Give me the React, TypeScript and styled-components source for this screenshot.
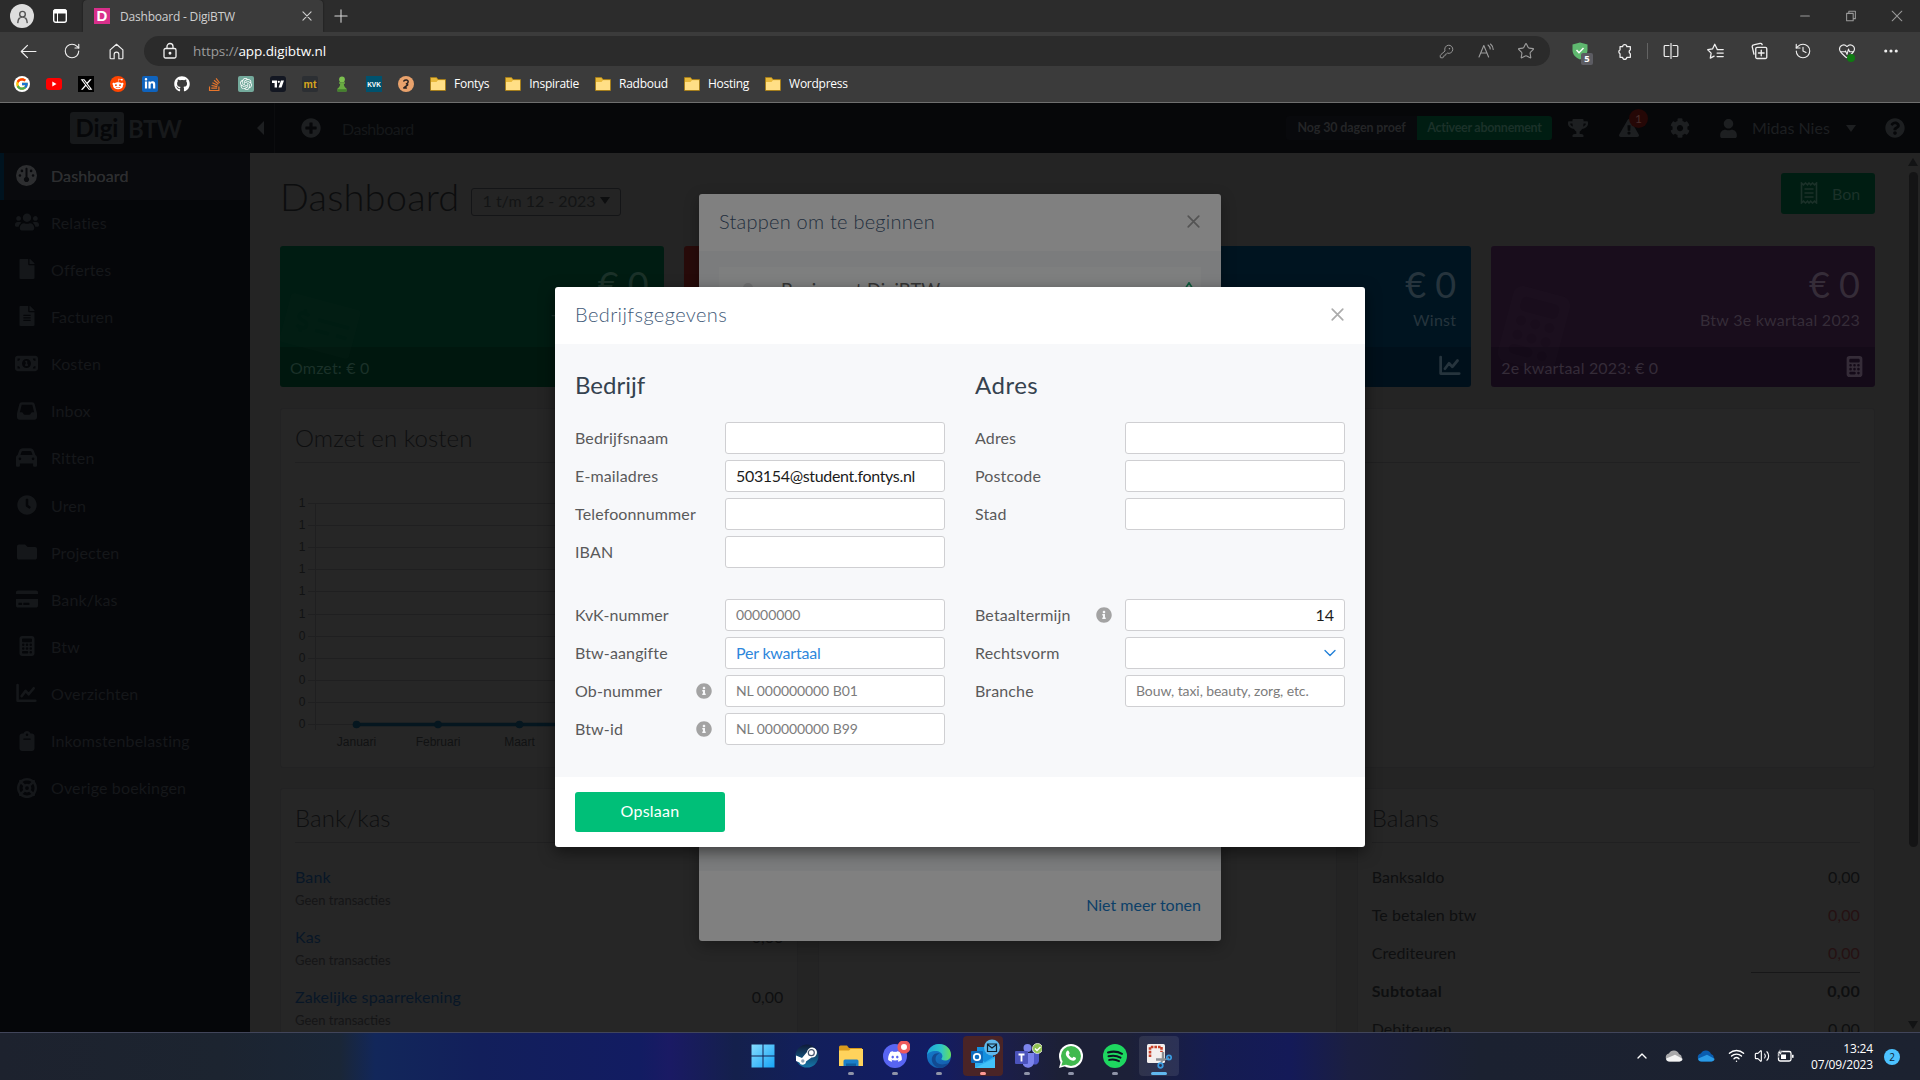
import React from 'react';
import styled, { createGlobalStyle, css } from 'styled-components';
import {
  FaUsers, FaFile, FaFileAlt, FaClock, FaFolder, FaCreditCard,
  FaPlusCircle, FaTrophy, FaExclamationTriangle, FaCog, FaUser,
  FaQuestionCircle, FaInfoCircle, FaGithub, FaStackOverflow,
  FaDiscord, FaRedditAlien, FaLinkedinIn, FaMoneyCheckAlt,
} from 'react-icons/fa';
import { FaXTwitter, FaCalculator, FaInbox, FaLifeRing, FaCar, FaGauge, FaMoneyBill1, FaClipboard } from 'react-icons/fa6';
import { FcGoogle } from 'react-icons/fc';
import { SiOpenai } from 'react-icons/si';
import { RotateCw, KeyRound, Star, History, HeartPulse, Ellipsis, ChevronUp, ChevronDown, Wifi, Volume2 } from 'lucide-react';

const appFont = `Lato, "Noto Sans", sans-serif`;
const chromeFont = `"Open Sans", "Noto Sans", sans-serif`;

const GlobalStyle = createGlobalStyle`
  * { box-sizing: border-box; }
  body { margin: 0; background: #242424; overflow: hidden; }
  svg { display: block; flex: none; }
`;

const Screen = styled.div`
  width: 1920px;
  height: 1080px;
  display: flex;
  flex-direction: column;
  overflow: hidden;
  font-family: ${appFont};
`;

/* ---------- browser chrome ---------- */

const TabStrip = styled.div`
  height: 32px;
  flex: none;
  display: flex;
  align-items: center;
  background: #2c2c2c;
  color: #cfcfcf;
  font-family: ${chromeFont};
`;
const Avatar = styled.div`
  width: 24px;
  height: 24px;
  margin: 0 19px 0 10px;
  border-radius: 50%;
  background: #dedede;
  display: grid;
  place-items: center;
`;
const Tab = styled.div`
  width: 240px;
  height: 32px;
  margin-left: 16px;
  padding: 0 11px;
  display: flex;
  align-items: center;
  background: #3b3b3b;
  border-radius: 4px 4px 0 0;
  box-shadow: 0 0 2px rgba(0, 0, 0, 0.6);
  clip-path: inset(0 -3px 0 -3px);
`;
const Favicon = styled.div`
  width: 16px;
  height: 16px;
  margin-right: 10px;
  background: #d92f8b;
  color: #fff;
  font: 700 15px/16px "Liberation Sans", sans-serif;
  text-align: center;
`;
const TabTitle = styled.span`
  flex: 1;
  font-size: 12px;
  letter-spacing: -0.2px;
`;
const NewTab = styled.div`
  margin-left: 11px;
  flex: 1;
`;
const WindowControls = styled.div`
  display: flex;
  > * { width: 46px; display: grid; place-items: center; }
`;
const Toolbar = styled.div`
  height: 38px;
  flex: none;
  display: flex;
  align-items: center;
  background: #3b3b3b;
  color: #efefef;
`;
const ToolSlot = styled.div<{ $w?: number }>`
  width: ${p => p.$w ?? 44}px;
  display: grid;
  place-items: center;
  position: relative;
`;
const NavButtons = styled.div`
  display: flex;
  padding-left: 6px;
  width: 144px;
`;
const AddressBar = styled.div`
  width: 1406px;
  height: 30px;
  margin-right: 8px;
  padding: 0 4px 0 17px;
  border-radius: 15px;
  background: #2b2b2b;
  display: flex;
  align-items: center;
  color: #9c9c9c;
  font: 400 13.5px/18px ${chromeFont};
`;
const Url = styled.span`
  flex: 1;
  margin-left: 14px;
  letter-spacing: -0.08px;
  b { font-weight: 400; color: #fff; }
`;
const ToolDivider = styled.div`
  width: 1px;
  height: 16px;
  margin: 0 1px;
  background: #636363;
`;
const ShieldCount = styled.span`
  position: absolute;
  left: 23px;
  top: 11px;
  width: 12px;
  height: 12px;
  border-radius: 2px;
  background: #5c5c62;
  color: #fff;
  font: 700 9.5px/12px ${chromeFont};
  text-align: center;
`;
const GreenDot = styled.span`
  position: absolute;
  left: 22px;
  top: 12px;
  width: 8px;
  height: 8px;
  border-radius: 50%;
  background: #0f7a12;
`;
const BookmarkBar = styled.div`
  height: 33px;
  flex: none;
  display: flex;
  align-items: flex-start;
  padding: 6px 0 0 14px;
  background: #3b3b3b;
  border-bottom: 1px solid #6f6f6f;
`;
const Bookmark = styled.div<{ $bg?: string; $fg?: string; $round?: number; $size?: number }>`
  width: 16px;
  height: 16px;
  margin-right: 16px;
  display: grid;
  place-items: center;
  overflow: hidden;
  background: ${p => p.$bg ?? 'transparent'};
  color: ${p => p.$fg ?? '#fff'};
  border-radius: ${p => p.$round ?? 0}px;
  font: 700 ${p => p.$size ?? 8}px/15px "Liberation Sans", sans-serif;
`;
const FolderLink = styled.div`
  display: flex;
  align-items: center;
  gap: 8px;
  height: 16px;
  margin-right: 16px;
  color: #fff;
  font: 400 12px/16px ${chromeFont};
  letter-spacing: -0.26px;
`;

/* ---------- application ---------- */

const Page = styled.div`
  height: 929px;
  flex: none;
  position: relative;
  display: flex;
  flex-direction: column;
  overflow: hidden;
  background: #242424;
`;
const TopNav = styled.div`
  height: 50px;
  flex: none;
  display: flex;
  align-items: center;
  background: #060709;
  color: #1d1f21;
  font-size: 16px;
`;
const Brand = styled.div`
  width: 275px;
  height: 50px;
  padding-left: 70px;
  display: flex;
  align-items: center;
  border-right: 1px solid #0b0c0e;
  font: 700 24px/31px ${appFont};
  color: #17191b;
`;
const BrandBox = styled.span`
  width: 54px;
  height: 32px;
  border-radius: 3px;
  background: #17191b;
  color: #060709;
  text-align: center;
`;
const BrandRest = styled.span`
  width: 128px;
  padding-left: 4px;
  letter-spacing: -0.6px;
`;
const CollapseArrow = styled.span`
  width: 0;
  height: 0;
  margin-left: 5px;
  border: 7px solid transparent;
  border-right-color: #1d1f21;
  border-left: 0;
`;
const Crumb = styled.span`
  flex: 1;
  margin-left: 21px;
  letter-spacing: -0.5px;
  color: #151719;
`;
const TrialNote = styled.span<{ $action?: boolean }>`
  width: ${p => (p.$action ? 135 : 131)}px;
  height: 24px;
  border-radius: ${p => (p.$action ? '0 3px 3px 0' : '3px 0 0 3px')};
  background: ${p => (p.$action ? '#001d12' : '#08090c')};
  color: ${p => (p.$action ? '#1b3129' : '#242527')};
  font: 700 12.5px/24px ${appFont};
  letter-spacing: ${p => (p.$action ? -0.28 : -0.12)}px;
  text-align: center;
`;
const NavIcon = styled.div<{ $w: number }>`
  width: ${p => p.$w}px;
  display: grid;
  place-items: center;
  position: relative;
`;
const AlertCount = styled.span`
  position: absolute;
  right: 7px;
  top: -9px;
  width: 19px;
  height: 19px;
  border-radius: 50%;
  background: #250706;
  color: #4a2e2c;
  font-size: 12px;
  line-height: 19px;
  text-align: center;
`;
const Caret = styled.span<{ $color?: string }>`
  border: 5.5px solid transparent;
  border-top: 7px solid ${p => p.$color ?? '#1d1f21'};
  border-bottom: 0;
`;
const UserName = styled.span`
  width: 94px;
  padding-bottom: 2px;
`;
const HelpSlot = styled.div`
  width: 64px;
  padding-left: 29px;
`;
const Body = styled.div`
  flex: 1;
  min-height: 0;
  display: flex;
`;
const Sidebar = styled.nav`
  width: 250px;
  flex: none;
  background: #050609;
`;
const SideItem = styled.div<{ $active?: boolean }>`
  height: 47.15px;
  padding-bottom: 3px;
  display: flex;
  align-items: center;
  color: #15171a;
  font-size: 16px;
  letter-spacing: 0.15px;
  border-left: 4px solid transparent;
  ${p => p.$active && css`
    background: #090a0d;
    color: #2d2e30;
    border-left-color: #00131f;
    text-shadow: 0 0 0.6px #2d2e30;
  `}
`;
const SideIcon = styled.span`
  width: 45px;
  margin-right: 2px;
  display: grid;
  place-items: center;
`;
const Main = styled.main`
  flex: 1;
  display: flex;
  flex-direction: column;
  padding: 0 33px 0 30px;
  min-width: 0;
`;
const TitleRow = styled.div`
  height: 93px;
  flex: none;
  padding-top: 20px;
  display: flex;
  align-items: flex-start;
`;
const PageTitle = styled.h1`
  margin: 0 12px 0 0;
  font-size: 38px;
  line-height: 46px;
  font-weight: 300;
  letter-spacing: 0.2px;
  color: #0c0d0e;
  white-space: nowrap;
`;
const PeriodSelect = styled.div`
  width: 150px;
  height: 28px;
  margin: 15px auto 0 0;
  padding-bottom: 3px;
  border: 1px solid #141517;
  border-radius: 3px;
  display: flex;
  align-items: center;
  justify-content: center;
  gap: 5px;
  color: #131415;
  font-size: 16px;
`;
const ReceiptButton = styled.div`
  width: 94px;
  height: 41px;
  border-radius: 3px;
  background: #001d12;
  color: #1b3129;
  display: flex;
  align-items: center;
  padding: 0 0 1px 19px;
  gap: 14px;
  font-size: 16px;
`;
const StatGrid = styled.div`
  display: grid;
  grid-template-columns: repeat(4, 1fr);
  gap: 20px;
`;
const StatCard = styled.div<{ $bg: string; $foot: string; $fg: string }>`
  height: 141px;
  border-radius: 3px;
  overflow: hidden;
  position: relative;
  background: linear-gradient(${p => p.$bg} 101px, ${p => p.$foot} 101px);
  color: ${p => p.$fg};
  font-size: 16px;
  line-height: 19px;
  display: flex;
  flex-direction: column;
`;
const StatTop = styled.div`
  height: 101px;
  padding: 17px 15px 0;
  text-align: right;
  letter-spacing: 0.25px;
`;
const StatValue = styled.div`
  font-size: 36px;
  line-height: 43px;
  margin-bottom: 4px;
  letter-spacing: 0;
`;
const StatFoot = styled.div`
  height: 40px;
  padding: 1px 10px 0 10px;
  display: flex;
  align-items: center;
  justify-content: space-between;
  letter-spacing: 0.16px;
  svg { margin: 0 0 3px; }
`;
const GhostIcon = styled.div`
  position: absolute;
  left: 4px;
  top: 44px;
  transform: rotate(15deg);
  opacity: 0.08;
`;
const Panel = styled.section<{ $h?: number }>`
  ${p => p.$h && css`height: ${p.$h}px;`}
  background: #262626;
  border: 1px solid #222223;
  border-radius: 3px;
  padding: 0 14px;
  color: #0e0f10;
  font-size: 16px;
  line-height: 19px;
`;
const PanelTitle = styled.h2`
  height: 54px;
  margin: 0;
  padding: 14px 0 0;
  border-bottom: 1px solid #202021;
  font-weight: 300;
  font-size: 24px;
  line-height: 29px;
  letter-spacing: 0.1px;
`;
const ChartPanel = styled(Panel)`
  margin: 21px 0 20px;
  flex: none;
`;
const PanelGrid = styled.div`
  flex: 1;
  min-height: 0;
  display: grid;
  grid-template-columns: repeat(3, 1fr);
  gap: 20px;
  grid-auto-rows: 300px;
`;
const AccountList = styled.div`
  padding-top: 24px;
`;
const Account = styled.div`
  height: 60px;
  display: grid;
  grid-template-columns: 1fr auto;
  align-content: start;
  row-gap: 6px;
`;
const AccountName = styled.span`
  color: #081626;
  letter-spacing: 0.13px;
`;
const AccountNote = styled.span`
  color: #151516;
  font-size: 13px;
  line-height: 16px;
`;
const BalanceRow = styled.div<{ $total?: boolean; $due?: boolean }>`
  height: 38px;
  display: flex;
  justify-content: space-between;
  letter-spacing: 0.1px;
  font-weight: ${p => (p.$total ? 700 : 400)};
  span:last-child {
    color: ${p => (p.$due ? '#251112' : 'inherit')};
    position: relative;
  }
  ${p => p.$total && css`
    letter-spacing: 0.3px;
    span:last-child::before {
      content: '';
      position: absolute;
      right: 0;
      top: -9px;
      width: 109px;
      border-top: 1px solid #171718;
    }
  `}
`;
const ScrollTrack = styled.div`
  width: 12px;
  flex: none;
  display: flex;
  flex-direction: column;
  align-items: center;
  padding: 5px 2px 3px 0;
`;
const ScrollArrow = styled.span<{ $down?: boolean }>`
  border: 5px solid transparent;
  ${p => (p.$down ? 'border-top: 8px solid #121314; border-bottom: 0; margin-top: auto;' : 'border-bottom: 8px solid #121314; border-top: 0;')}
`;
const ScrollThumb = styled.span`
  width: 9px;
  height: 675px;
  margin-top: 6px;
  border-radius: 5px;
  background: #141415;
`;

/* ---------- dialogs ---------- */

const Dialog = styled.div<{ $x: number; $y: number; $w: number; $h: number; $dim?: boolean }>`
  position: absolute;
  left: ${p => p.$x}px;
  top: ${p => p.$y}px;
  width: ${p => p.$w}px;
  height: ${p => p.$h}px;
  display: flex;
  flex-direction: column;
  border-radius: 3px;
  overflow: hidden;
  background: ${p => (p.$dim ? '#808080' : '#fff')};
  box-shadow: 0 5px 15px rgba(0, 0, 0, ${p => (p.$dim ? 0.3 : 0.5)});
`;
const DialogHead = styled.div<{ $dim?: boolean }>`
  height: 57px;
  flex: none;
  padding: 0 21px 3px 20px;
  display: flex;
  align-items: center;
  justify-content: space-between;
  color: ${p => (p.$dim ? '#1f2e3d' : '#3f5a78')};
  font-weight: 300;
  font-size: 20px;
  letter-spacing: ${p => (p.$dim ? 0.24 : 0.4)}px;
`;
const StepsBody = styled.div`
  height: 620px;
  padding: 16px 20px;
  background: #7b7c7d;
`;
const StepCard = styled.div`
  height: 60px;
  padding: 12px 6px 0 24px;
  display: flex;
  background: #7e7f7f;
  color: #353535;
  font-size: 18.3px;
  line-height: 22px;
`;
const StepDot = styled.span`
  width: 10px;
  height: 10px;
  margin: 4px 28px 0 0;
  border-radius: 50%;
  background: #6f7071;
`;
const StepName = styled.span`
  flex: 1;
`;
const StepsFoot = styled.div`
  flex: 1;
  padding: 24px 20px 0;
  text-align: right;
  color: #0c3f68;
  font-size: 16px;
`;
const FormBody = styled.div`
  height: 433px;
  padding: 0 20px;
  background: #f7f8fa;
  display: grid;
  grid-template-columns: 370px 370px;
  column-gap: 30px;
`;
const FormColumn = styled.div`
  padding-top: 26px;
`;
const FormTitle = styled.h3<{ $ls: number }>`
  height: 52px;
  margin: 0;
  font-weight: 400;
  font-size: 24px;
  line-height: 29px;
  letter-spacing: ${p => p.$ls}px;
  color: #35424f;
`;
const FieldGroup = styled.div`
  height: 177px;
  display: flex;
  flex-direction: column;
  gap: 6px;
`;
const FieldRow = styled.div`
  height: 32px;
  display: flex;
  align-items: center;
`;
const Label = styled.label`
  flex: 1;
  font-size: 16px;
  line-height: 19px;
  letter-spacing: 0.14px;
  color: #5a5a5a;
  padding-bottom: 2px;
`;
const Info = styled.span`
  margin-right: 13px;
  color: #a3a3a3;
`;
const Field = styled.div<{ $kind?: 'value' | 'hint' | 'choice'; $right?: boolean; $tight?: boolean }>`
  width: 220px;
  height: 32px;
  padding: 0 5px ${p => (p.$kind === 'hint' ? 1 : 2)}px 10px;
  border: 1px solid #cfcfd2;
  border-radius: 3px;
  background: #fff;
  display: flex;
  align-items: center;
  justify-content: ${p => (p.$right ? 'flex-end' : 'flex-start')};
  ${p => p.$right && css`padding-right: 10px;`}
  font-size: ${p => (p.$kind === 'hint' ? 14 : 16)}px;
  letter-spacing: ${p => (p.$tight ? -0.33 : p.$kind === 'choice' ? -0.2 : -0.08)}px;
  color: ${p => (p.$kind === 'hint' ? '#7c7c7c' : p.$kind === 'choice' ? '#2e87dc' : '#1c1c1c')};
  white-space: nowrap;
  svg { margin: 1px -1px 0 auto; }
`;
const FormFoot = styled.div`
  padding: 15px 20px;
`;
const SaveButton = styled.div`
  width: 150px;
  height: 40px;
  border-radius: 3px;
  background: #00bf78;
  color: #fff;
  font-size: 16px;
  line-height: 38px;
  letter-spacing: 0.25px;
  text-align: center;
`;

/* ---------- taskbar ---------- */

const Taskbar = styled.div`
  height: 48px;
  flex: none;
  display: grid;
  grid-template-columns: 741px 440px 1fr;
  border-top: 1px solid #41455a;
  background: linear-gradient(90deg, #1d222e 0, #1c2430 220px, #1a2637 340px, #12275a 375px, #121f5b 480px, #121c62 640px,
    #1a1a64 670px, #14204c 735px, #121f5a 800px, #121c64 930px, #1b1d50 985px, #1c2036 1060px, #1c2038 1130px,
    #151c50 1210px, #141a58 1290px, #1b1f40 1350px, #1b2130 1480px, #1c2230 1920px);
`;
const AppTray = styled.div`
  grid-column: 2;
  display: flex;
`;
const TaskApp = styled.div<{ $bg?: string; $mark?: string; $wide?: boolean }>`
  width: 44px;
  height: 47px;
  padding-bottom: 1px;
  position: relative;
  display: grid;
  place-items: center;
  &::before {
    content: '';
    position: absolute;
    inset: 3px 2px 4px;
    border-radius: 4px;
    background: ${p => p.$bg ?? 'transparent'};
  }
  &::after {
    content: '';
    position: absolute;
    bottom: 5px;
    width: ${p => (p.$wide ? 16 : 6)}px;
    height: 3px;
    border-radius: 2px;
    background: ${p => p.$mark ?? 'transparent'};
  }
  > svg { position: relative; }
`;
const SystemTray = styled.div`
  display: flex;
  align-items: center;
  justify-content: flex-end;
  padding-right: 20px;
  color: #fff;
`;
const TraySlot = styled.div<{ $w: number }>`
  width: ${p => p.$w}px;
  padding-bottom: 2px;
  display: grid;
  place-items: center;
`;
const Clock = styled.div`
  width: 77px;
  margin-right: 11px;
  text-align: right;
  font: 400 12px/16px ${chromeFont};
  letter-spacing: -0.17px;
`;
const NoticeCount = styled.div`
  width: 16px;
  height: 16px;
  border-radius: 50%;
  background: #4cc2ff;
  color: #123;
  font: 400 10px/16px ${chromeFont};
  text-align: center;
`;

/* ---------- drawings ---------- */

const Line = ({ d, s = 16, w = 1.2, c = 'currentColor' }: { d: string; s?: number; w?: number; c?: string }) => (
  <svg width={s} height={s} viewBox="0 0 16 16" fill="none" stroke={c} strokeWidth={w} strokeLinecap="round" strokeLinejoin="round">
    <path d={d} />
  </svg>
);
const Cross = ({ c, s = 13 }: { c: string; s?: number }) => <Line d="M1.5 1.5l13 13M14.5 1.5l-13 13" s={s} w={2.1} c={c} />;
const Trend = ({ s }: { s: number }) => <Line d="M1.200 1.500v12h13.500M4.300 10l3-4 2.400 2.600L13.500 4" s={s} w={2} />;

const FolderGlyph = () => (
  <svg width="16" height="16" viewBox="0 0 16 16">
    <path d="M.5 1.500h6l1.500 2h7.500v11H.5z" fill="#e8b93b" stroke="#a97f14" strokeWidth=".8" />
    <path d="M1 6h5.500L8 4.300h7V14H1z" fill="#ffdf86" />
  </svg>
);

const months = ['Januari', 'Februari', 'Maart', 'April', 'Mei', 'Juni', 'Juli', 'Augustus', 'September', 'Oktober', 'November', 'December'];
const ticks = ['1', '1', '1', '1', '1', '1', '0', '0', '0', '0', '0'];

const Chart = () => (
  <svg width="1060" height="300" viewBox="295 463 1060 300" fontFamily="Liberation Sans, sans-serif" fontSize="12" fill="#111213">
    {ticks.map((t, i) => (
      <g key={i}>
        <path d={`M308 ${Math.round(503 + i * 22.1) + 0.5}H1294`} stroke="#1f1f20" />
        <text x="305.500" y={507 + i * 22.1} textAnchor="end">{t}</text>
      </g>
    ))}
    <path d="M315.500 503V730" stroke="#1f1f20" />
    <path d="M356.500 724.500H1253" stroke="#05161f" strokeWidth="3.500" />
    {months.map((m, i) => (
      <g key={m}>
        <circle cx={356.5 + i * 81.5} cy="724.500" r="3.800" fill="#05161f" />
        <text x={356.5 + i * 81.5} y="746" textAnchor="middle">{m}</text>
      </g>
    ))}
  </svg>
);

const Windows = () => (
  <svg width="24" height="24" viewBox="0 0 24 24">
    <defs>
      <linearGradient id="win" x1="0" y1="0" x2="1" y2="1"><stop offset="0" stopColor="#86dcff" /><stop offset="1" stopColor="#16a4f5" /></linearGradient>
    </defs>
    <path d="M.5.500h11v11H.5zM12.500.500h11v11h-11zM.5 12.500h11v11H.5zM12.500 12.500h11v11h-11z" fill="url(#win)" />
  </svg>
);
const Steam = () => (
  <svg width="24" height="24" viewBox="0 0 24 24">
    <defs><linearGradient id="stm" x1="0" y1="0" x2="0" y2="1"><stop offset="0" stopColor="#101a38" /><stop offset="1" stopColor="#1576a8" /></linearGradient></defs>
    <circle cx="12" cy="12" r="11.500" fill="url(#stm)" />
    <path d="M1 11.500l6 2.500 5-6a5 5 0 1 1 4.500 5.500L11 17.500a3.400 3.400 0 0 1-6.600 1L1 17z" fill="#fff" />
    <circle cx="16.300" cy="8.700" r="3" fill="none" stroke="#45536b" strokeWidth="1.200" />
    <circle cx="7.800" cy="17" r="1.700" fill="#8fa3b5" />
  </svg>
);
const Explorer = () => (
  <svg width="26" height="24" viewBox="0 0 26 24">
    <path d="M1 3a1.500 1.500 0 0 1 1.500-1.500H9L11 4h13v5H1z" fill="#d99a1c" />
    <path d="M1 6.500h10L12.500 5H25v17H1z" fill="#ffd35c" />
    <path d="M5.500 22v-5a1.500 1.500 0 0 1 1.500-1.500h12a1.500 1.500 0 0 1 1.500 1.500v5z" fill="#1b7fc9" />
    <path d="M8 22v-2.500h10V22z" fill="#10609f" />
  </svg>
);
const Discord = () => (
  <svg width="30" height="30" viewBox="0 0 30 30">
    <circle cx="15" cy="15" r="12" fill="#5865f2" />
    <g transform="translate(7.500 8)"><FaDiscord size={15} color="#fff" /></g>
    <circle cx="24" cy="6" r="4.800" fill="#fff" stroke="#ee5a5c" strokeWidth="3.600" />
  </svg>
);
const Edge = () => (
  <svg width="24" height="24" viewBox="0 0 24 24">
    <defs>
      <linearGradient id="edgeA" x1="0" y1=".3" x2="1" y2=".3"><stop offset="0" stopColor="#1ca6dc" /><stop offset=".6" stopColor="#2fc6c6" /><stop offset="1" stopColor="#67df5a" /></linearGradient>
      <linearGradient id="edgeB" x1="0" y1="0" x2=".6" y2="1"><stop offset="0" stopColor="#1380cf" /><stop offset="1" stopColor="#1560b0" /></linearGradient>
    </defs>
    <circle cx="12" cy="12" r="12" fill="url(#edgeB)" />
    <path d="M0 11C1 4 6 0 12 0c7 0 12 5 12 10.500 0 4-3 6-6 6-2.600 0-4-1-3.600-1.700.5-.8 1-1.400 1-2.800C15.400 9 12 7 8.500 7 4 7 1 9 0 11z" fill="url(#edgeA)" />
    <path d="M8.500 15c0-3 2-5 4-5.500C8 8 4 12 5 17c.6 3 3.500 6.500 7.500 7 4 0 7-2 9-5-7 3-13 1-13-4z" fill="#124a92" />
  </svg>
);
const Outlook = () => (
  <svg width="34" height="34" viewBox="0 0 34 34">
    <path d="M11 8h16v20H11z" fill="#1490df" />
    <path d="M9 18l10 5 10-6v12H9z" fill="#2fb0f2" />
    <path d="M9 29l20-10v10z" fill="#50d0ff" opacity=".6" />
    <rect x="5" y="12" width="12" height="12" rx="1" fill="#0f6cbd" />
    <circle cx="11" cy="18" r="3.200" fill="none" stroke="#fff" strokeWidth="1.800" />
    <circle cx="26" cy="8.500" r="8" fill="#5fb8ec" />
    <path d="M21.500 5h9v7.500h-9zM21.500 5.500l4.500 3.500 4.500-3.500" fill="none" stroke="#10202e" strokeWidth="1.200" />
  </svg>
);
const Teams = () => (
  <svg width="30" height="30" viewBox="0 0 30 30">
    <circle cx="15.500" cy="7" r="4" fill="#7b83eb" />
    <circle cx="23" cy="9" r="3" fill="#5059c9" />
    <path d="M20 12h7v8a4 4 0 0 1-6 3z" fill="#5059c9" />
    <path d="M11 12h11v9a6 6 0 0 1-11 3z" fill="#7b83eb" />
    <rect x="3" y="10" width="13" height="13" rx="1" fill="#4b53bc" />
    <path d="M6.500 13.500h6M9.500 13.500v7" stroke="#fff" strokeWidth="1.800" />
    <circle cx="25.500" cy="7.500" r="5" fill="#92c353" stroke="#f3f3e6" strokeWidth=".8" />
    <path d="M23 7.500l2 2 3.500-3.500" stroke="#fff" strokeWidth="1.400" fill="none" />
  </svg>
);
const WhatsApp = () => (
  <svg width="24" height="24" viewBox="0 0 24 24">
    <circle cx="12" cy="12" r="12" fill="#fff" />
    <path d="M0 24l2-7 5 5z" fill="#fff" />
    <circle cx="12" cy="12" r="10" fill="#40b94e" />
    <path d="M2.300 21.700l1.500-5 4 3.700z" fill="#40b94e" />
    <path d="M7.500 7.500c1-1.500 2-1 2.400 0l.7 1.600c.1.500-.8 1.300-.8 1.600.7 1.500 2 2.600 3.500 3.200.4 0 1-1.200 1.500-1.100l2 1c.6.500-.1 3-2.400 3-3.600 0-8-4.500-7.600-7.200.1-.8.400-1.600.7-2.100z" fill="#fff" />
  </svg>
);
const Spotify = () => (
  <svg width="24" height="24" viewBox="0 0 24 24">
    <circle cx="12" cy="12" r="12" fill="#1ed760" />
    <path d="M5 8.500c4.500-1.300 10-1 14 1.300M5.500 12.300c4-1.100 8.500-.7 12 1.300M6.200 15.900c3.300-.8 6.700-.5 9.800 1.200" stroke="#0d1420" strokeWidth="2" fill="none" strokeLinecap="round" />
  </svg>
);
const Snip = () => (
  <svg width="26" height="26" viewBox="0 0 26 26">
    <rect x="1" y="1" width="18" height="19" rx="1.500" fill="#f3efee" />
    <path d="M4 14V4h11.500v5" stroke="#c8412a" strokeWidth="2.600" strokeDasharray="2.600 1" fill="none" />
    <path d="M17 9v9M10 16.500h9" stroke="#8b8f94" strokeWidth="2.400" />
    <path d="M17 16l-2 4M18 17l5-2" stroke="#8b8f94" strokeWidth="1.800" />
    <circle cx="14.500" cy="22.500" r="2.300" fill="none" stroke="#3a9be0" strokeWidth="1.700" />
    <circle cx="23" cy="14.500" r="2.200" fill="none" stroke="#3a9be0" strokeWidth="1.700" />
  </svg>
);
const Pawn = () => (
  <svg width="12" height="16" viewBox="0 0 12 16">
    <circle cx="6" cy="3.400" r="2.900" fill="#7cc04f" />
    <path d="M3 6.200h6v1.500H7.800c.2 2.500 1.200 3.600 2.700 4.800V15.500h-9v-3C3 11.300 4 10.200 4.200 7.700H3z" fill="#69ab42" />
    <path d="M1.500 13.200h9v2.300h-9z" fill="#43802c" />
  </svg>
);
const Cloud = ({ a, b }: { a: string; b: string }) => (
  <svg width="18" height="14" viewBox="0 0 18 14">
    <path d="M4.500 12.500a4 4 0 0 1-.6-7.900A5.500 5.500 0 0 1 14 5a4 4 0 0 1 .5 7.500z" fill={a} />
    <path d="M4.500 12.500C2 12.500 1 11 1.300 9.500L10 5.800l7.500 4c0 1.700-1.300 2.700-3 2.700z" fill={b} />
  </svg>
);
const Battery = () => (
  <svg width="18" height="16" viewBox="0 0 18 16" fill="none" stroke="#fff" strokeWidth="1.300">
    <rect x="2.500" y="3.500" width="12.500" height="9.500" rx="1.800" />
    <path d="M16.800 6.800v3" strokeWidth="1.600" />
    <rect x="5" y="6.500" width="5" height="4.500" fill="#fff" stroke="none" />
    <path d="M4.500.500L1.200 5.800h2.400L2.300 9.500 6.500 4H4z" fill="#fff" stroke="#1c2230" strokeWidth=".6" />
  </svg>
);
const Receipt = () => (
  <svg width="18" height="22" viewBox="0 0 18 22" fill="none" stroke="currentColor" strokeWidth="1.600">
    <path d="M1.500 1l2 1.800L5.500 1l2 1.800L9 1l1.700 1.800L12.500 1l2 1.800L16.500 1v20l-2-1.800-2 1.800-1.800-1.800L9 21l-1.500-1.800-2 1.800-2-1.800L1.500 21z" />
    <path d="M4.500 7h9M4.500 11h9M4.500 15h9" />
  </svg>
);

const sideItems: [string, React.ReactNode][] = [
  ['Dashboard', <FaGauge size={21} />],
  ['Relaties', <FaUsers size={24} />],
  ['Offertes', <FaFile size={20} />],
  ['Facturen', <FaFileAlt size={20} />],
  ['Kosten', <FaMoneyBill1 size={23} />],
  ['Inbox', <FaInbox size={20} />],
  ['Ritten', <FaCar size={21} />],
  ['Uren', <FaClock size={20} />],
  ['Projecten', <FaFolder size={20} />],
  ['Bank/kas', <FaCreditCard size={22} />],
  ['Btw', <FaCalculator size={20} />],
  ['Overzichten', <Trend s={21} />],
  ['Inkomstenbelasting', <FaClipboard size={20} />],
  ['Overige boekingen', <FaLifeRing size={20} />],
];

const stats = [
  { label: 'Te ontvangen', foot: 'Omzet: € 0', bg: '#001c12', dark: '#00170e', fg: '#1b3129', ghost: <FaMoneyCheckAlt size={72} />, icon: null },
  { label: 'Te betalen', foot: 'Kosten: € 0', bg: '#280b0a', dark: '#200908', fg: '#402a29', ghost: null, icon: null },
  { label: 'Winst', foot: '', bg: '#001420', dark: '#00101b', fg: '#26343d', ghost: null, icon: <Trend s={22} /> },
  { label: 'Btw 3e kwartaal 2023', foot: '2e kwartaal 2023: € 0', bg: '#190d1c', dark: '#140a18', fg: '#352c38', ghost: <FaCalculator size={78} />, icon: <FaCalculator size={21} /> },
];

type FieldSpec = { label: string; text?: string; kind?: 'value' | 'hint' | 'choice'; info?: boolean; right?: boolean; tight?: boolean; arrow?: boolean };
const leftTop: FieldSpec[] = [
  { label: 'Bedrijfsnaam' },
  { label: 'E-mailadres', text: '503154@student.fontys.nl', tight: true },
  { label: 'Telefoonnummer' },
  { label: 'IBAN' },
];
const leftBottom: FieldSpec[] = [
  { label: 'KvK-nummer', text: '00000000', kind: 'hint' },
  { label: 'Btw-aangifte', text: 'Per kwartaal', kind: 'choice' },
  { label: 'Ob-nummer', text: 'NL 000000000 B01', kind: 'hint', info: true },
  { label: 'Btw-id', text: 'NL 000000000 B99', kind: 'hint', info: true },
];
const rightTop: FieldSpec[] = [{ label: 'Adres' }, { label: 'Postcode' }, { label: 'Stad' }];
const rightBottom: FieldSpec[] = [
  { label: 'Betaaltermijn', text: '14', info: true, right: true },
  { label: 'Rechtsvorm', arrow: true },
  { label: 'Branche', text: 'Bouw, taxi, beauty, zorg, etc.', kind: 'hint' },
];

const Fields = ({ items }: { items: FieldSpec[] }) => (
  <FieldGroup>
    {items.map(f => (
      <FieldRow key={f.label}>
        <Label>{f.label}</Label>
        {f.info && <Info><FaInfoCircle size={16} /></Info>}
        <Field $kind={f.kind} $right={f.right} $tight={f.tight}>
          {f.text}
          {f.arrow && <ChevronDown size={20} strokeWidth={1.6} color="#2280d8" />}
        </Field>
      </FieldRow>
    ))}
  </FieldGroup>
);

const Browser = () => (
  <>
    <TabStrip>
      <Avatar><Line d="M8 8.500a3 3 0 1 0 0-6 3 3 0 0 0 0 6zM3 14.500c.3-4 2.300-6 5-6s4.700 2 5 6" s={15} w={1.5} c="#555" /></Avatar>
      <svg width="14" height="14" viewBox="0 0 14 14"><rect x=".7" y=".7" width="12.600" height="12.600" rx="2" fill="none" stroke="#fff" strokeWidth="1.400" /><path d="M1 1h12v3H1zM4.500 4v9" stroke="#fff" fill="#fff" /></svg>
      <Tab>
        <Favicon>D</Favicon>
        <TabTitle>Dashboard - DigiBTW</TabTitle>
        <Line d="M1.500 1.500l13 13M14.500 1.500l-13 13" s={10} w={1.8} c="#cfcfcf" />
      </Tab>
      <NewTab><Line d="M8 1v14M1 8h14" s={14} c="#d8d8d8" /></NewTab>
      <WindowControls>
        <Line d="M3 8h10" c="#9a9a9a" s={14} />
        <Line d="M3 5h7.500v8.500H3zM5.500 5V2.500H13V11h-2.500" c="#9a9a9a" s={14} />
        <Line d="M2.500 2.500l11 11M13.500 2.500l-11 11" c="#9a9a9a" s={14} />
      </WindowControls>
    </TabStrip>
    <Toolbar>
      <NavButtons>
        <ToolSlot><Line d="M15 8H1.500M7 2.200L1.200 8 7 13.800" s={17} w={1.1} /></ToolSlot>
        <ToolSlot><RotateCw size={18} strokeWidth={1.5} /></ToolSlot>
        <ToolSlot><Line d="M2 6.500L8 1.200l6 5.300V14a.8.800 0 0 1-.8.800H10.200v-4a2.200 2.200 0 0 0-4.400 0v4H2.800A.8.800 0 0 1 2 14z" s={17} w={1.1} /></ToolSlot>
      </NavButtons>
      <AddressBar>
        <svg width="18" height="18" viewBox="0 0 18 18" fill="none" stroke="#f0f0f0" strokeWidth="1.300"><rect x="3" y="6.500" width="12" height="9.500" rx="1.500" /><path d="M6 6.500V4.500a3 3 0 0 1 6 0v2" /><circle cx="9" cy="11.300" r=".8" fill="#fff" /></svg>
        <Url>https://<b>app.digibtw.nl</b></Url>
        <ToolSlot $w={40}><KeyRound size={15} strokeWidth={1.5} /></ToolSlot>
        <ToolSlot $w={40}><Line d="M1 14L5.800 2.500 10.600 14M2.800 10h6M10 2c1.600 1.200 2.200 2.600 2.200 4M12.500 1c1.800 1.500 2.700 3.200 2.700 5.500" s={16} w={1.1} /></ToolSlot>
        <ToolSlot $w={40}><Star size={18} strokeWidth={1.5} /></ToolSlot>
      </AddressBar>
      <ToolSlot>
        <svg width="16" height="18" viewBox="0 0 16 18"><path d="M8 .5l7.500 2V8c0 5-3.500 7.500-7.500 9.500C4 15.500.5 13 .5 8V2.500z" fill="#5fb86f" /><path d="M4.500 8l2.500 2.700L11.500 6" stroke="#fff" strokeWidth="1.500" fill="none" /></svg>
        <ShieldCount>5</ShieldCount>
      </ToolSlot>
      <ToolSlot><Line d="M3.800 3.500h2.400a2 2 0 0 1 4 0h3.300v3a2 2 0 0 0 0 3.600v3.400h-3.300a2 2 0 0 1-4 0H3.800v-3.400a2 2 0 0 1 0-3.600z" s={17} /></ToolSlot>
      <ToolDivider />
      <ToolSlot><Line d="M6 2.500H2.200a1 1 0 0 0-1 1v9a1 1 0 0 0 1 1H6M10 2.500h3.800a1 1 0 0 1 1 1v9a1 1 0 0 1-1 1H10M8 .5v15" /></ToolSlot>
      <ToolSlot><Line d="M9.500 5.600L7.300 1.200 5.200 5.600.700 6.300l3.200 3.200-.8 4.700 3.600-1.900M9.500 6.200H15.300M9.500 9.500H15.300M9.500 12.800H15.300" s={17} /></ToolSlot>
      <ToolSlot><Line d="M3.500 10.800L2 4.300a1.500 1.500 0 0 1 1.200-1.800L9 1.200a1.500 1.500 0 0 1 1.800 1.200M6.300 4.800h7.400a1.200 1.200 0 0 1 1.200 1.200v7.500a1.200 1.200 0 0 1-1.200 1.200H6.300a1.200 1.200 0 0 1-1.200-1.200V6a1.200 1.200 0 0 1 1.200-1.200zM10 7.300v5M7.500 9.800h5" s={18} /></ToolSlot>
      <ToolSlot><History size={18} strokeWidth={1.5} /></ToolSlot>
      <ToolSlot><HeartPulse size={18} strokeWidth={1.5} /><GreenDot /></ToolSlot>
      <ToolSlot><Ellipsis size={18} strokeWidth={2.2} /></ToolSlot>
    </Toolbar>
    <BookmarkBar>
      <Bookmark $bg="#fff" $round={8}><FcGoogle size={14} /></Bookmark>
      <Bookmark><svg width="16" height="12" viewBox="0 0 16 12"><rect width="16" height="12" rx="3" fill="#f00" /><path d="M6.300 3.500l4.200 2.500-4.200 2.500z" fill="#fff" /></svg></Bookmark>
      <Bookmark $bg="#000"><FaXTwitter size={13} /></Bookmark>
      <Bookmark $bg="#ff4500" $round={8}><FaRedditAlien size={12} /></Bookmark>
      <Bookmark $bg="#0f63bd" $round={2}><FaLinkedinIn size={12} /></Bookmark>
      <Bookmark><FaGithub size={16} /></Bookmark>
      <Bookmark $fg="#e8762c"><FaStackOverflow size={15} /></Bookmark>
      <Bookmark $bg="#74aa9c" $round={2}><SiOpenai size={12} /></Bookmark>
      <Bookmark $bg="#131722" $round={3}><svg width="12" height="8" viewBox="0 0 12 8"><path d="M0 .5h5V7.500H2.600V3H0z" fill="#fff" /><circle cx="6.800" cy="1.800" r="1.100" fill="#fff" /><path d="M9 .5h3L9.500 7.500H6.600z" fill="#fff" /></svg></Bookmark>
      <Bookmark $bg="#2c2f33" $fg="#d6a51e" $round={2} $size={10.5}>mt</Bookmark>
      <Bookmark><Pawn /></Bookmark>
      <Bookmark $bg="#00526e"><svg width="14" height="8" viewBox="0 0 14 8" fontFamily="Liberation Sans" fontWeight="700" fontSize="6.500" fill="#fff"><text x="7" y="6.500" textAnchor="middle">KVK</text></svg></Bookmark>
      <Bookmark $bg="#e9a26c" $round={8}><Line d="M5.500 4.500C7 3 10.500 3 10.500 5.500c0 1.500-1 2-2 2.200l1.500 1.300-4.500 3.500h3" c="#2a2220" w={1.7} s={14} /></Bookmark>
      {['Fontys', 'Inspiratie', 'Radboud', 'Hosting', 'Wordpress'].map(name => (
        <FolderLink key={name}><FolderGlyph />{name}</FolderLink>
      ))}
    </BookmarkBar>
  </>
);

export default function App() {
  return (
    <Screen>
      <GlobalStyle />
      <Browser />
      <Page>
        <TopNav>
          <Brand>
            <BrandBox>Digi</BrandBox>
            <BrandRest>BTW</BrandRest>
            <CollapseArrow />
          </Brand>
          <NavIcon $w={46}><NavIcon $w={72}><FaPlusCircle size={20} /></NavIcon></NavIcon>
          <Crumb>Dashboard</Crumb>
          <TrialNote>Nog 30 dagen proef</TrialNote>
          <TrialNote $action>Activeer abonnement</TrialNote>
          <NavIcon $w={51}><FaTrophy size={20} /></NavIcon>
          <NavIcon $w={52}><FaExclamationTriangle size={20} /><AlertCount>1</AlertCount></NavIcon>
          <NavIcon $w={49}><FaCog size={20} /></NavIcon>
          <NavIcon $w={48}><FaUser size={19} /></NavIcon>
          <UserName>Midas Nies</UserName>
          <Caret />
          <HelpSlot><FaQuestionCircle size={20} /></HelpSlot>
        </TopNav>
        <Body>
          <Sidebar>
            {sideItems.map(([name, icon], i) => (
              <SideItem key={name} $active={i === 0}><SideIcon>{icon}</SideIcon>{name}</SideItem>
            ))}
          </Sidebar>
          <Main>
            <TitleRow>
              <PageTitle>Dashboard</PageTitle>
              <PeriodSelect>1 t/m 12 - 2023<Caret $color="#0d0e0f" /></PeriodSelect>
              <ReceiptButton><Receipt />Bon</ReceiptButton>
            </TitleRow>
            <StatGrid>
              {stats.map(s => (
                <StatCard key={s.label} $bg={s.bg} $foot={s.dark} $fg={s.fg}>
                  {s.ghost && <GhostIcon>{s.ghost}</GhostIcon>}
                  <StatTop><StatValue>€ 0</StatValue>{s.label}</StatTop>
                  <StatFoot><span>{s.foot}</span>{s.icon}</StatFoot>
                </StatCard>
              ))}
            </StatGrid>
            <ChartPanel $h={360}>
              <PanelTitle>Omzet en kosten</PanelTitle>
              <Chart />
            </ChartPanel>
            <PanelGrid>
              <Panel>
                <PanelTitle>Bank/kas</PanelTitle>
                <AccountList>
                  {['Bank', 'Kas', 'Zakelijke spaarrekening'].map(name => (
                    <Account key={name}>
                      <AccountName>{name}</AccountName><span>0,00</span>
                      <AccountNote>Geen transacties</AccountNote>
                    </Account>
                  ))}
                </AccountList>
              </Panel>
              <Panel />
              <Panel>
                <PanelTitle>Balans</PanelTitle>
                <AccountList>
                  <BalanceRow><span>Banksaldo</span><span>0,00</span></BalanceRow>
                  <BalanceRow $due><span>Te betalen btw</span><span>0,00</span></BalanceRow>
                  <BalanceRow $due><span>Crediteuren</span><span>0,00</span></BalanceRow>
                  <BalanceRow $total><span>Subtotaal</span><span>0,00</span></BalanceRow>
                  <BalanceRow><span>Debiteuren</span><span>0,00</span></BalanceRow>
                </AccountList>
              </Panel>
            </PanelGrid>
          </Main>
          <ScrollTrack><ScrollArrow /><ScrollThumb /><ScrollArrow $down /></ScrollTrack>
        </Body>

        <Dialog $x={699} $y={91} $w={522} $h={747} $dim>
          <DialogHead $dim>Stappen om te beginnen<Cross c="#545454" /></DialogHead>
          <StepsBody>
            <StepCard><StepDot /><StepName>Begin met DigiBTW</StepName><Line d="M3 13L8 5l5 8" c="#0d5a3c" s={12} w={2} /></StepCard>
          </StepsBody>
          <StepsFoot>Niet meer tonen</StepsFoot>
        </Dialog>

        <Dialog $x={555} $y={184} $w={810} $h={560}>
          <DialogHead>Bedrijfsgegevens<Cross c="#acacac" /></DialogHead>
          <FormBody>
            <FormColumn>
              <FormTitle $ls={0}>Bedrijf</FormTitle>
              <Fields items={leftTop} />
              <Fields items={leftBottom} />
            </FormColumn>
            <FormColumn>
              <FormTitle $ls={0.5}>Adres</FormTitle>
              <Fields items={rightTop} />
              <Fields items={rightBottom} />
            </FormColumn>
          </FormBody>
          <FormFoot><SaveButton>Opslaan</SaveButton></FormFoot>
        </Dialog>
      </Page>

      <Taskbar>
        <AppTray>
          <TaskApp><Windows /></TaskApp>
          <TaskApp><Steam /></TaskApp>
          <TaskApp $mark="#8f94a8"><Explorer /></TaskApp>
          <TaskApp $mark="#8f94a8"><Discord /></TaskApp>
          <TaskApp $mark="#8f94a8"><Edge /></TaskApp>
          <TaskApp $mark="#ff9a94" $bg="#4a2426"><Outlook /></TaskApp>
          <TaskApp $mark="#8f94a8"><Teams /></TaskApp>
          <TaskApp $mark="#8f94a8"><WhatsApp /></TaskApp>
          <TaskApp $mark="#8f94a8"><Spotify /></TaskApp>
          <TaskApp $mark="#60b8f0" $bg="rgba(255,255,255,.09)" $wide><Snip /></TaskApp>
        </AppTray>
        <SystemTray>
          <TraySlot $w={32}><ChevronUp size={16} /></TraySlot>
          <TraySlot $w={32}><Cloud a="#a9a9ab" b="#f4f4f4" /></TraySlot>
          <TraySlot $w={32}><Cloud a="#0a5cae" b="#2a9be6" /></TraySlot>
          <TraySlot $w={28}><Wifi size={17} strokeWidth={2} /></TraySlot>
          <TraySlot $w={24}><Volume2 size={16} strokeWidth={1.7} /></TraySlot>
          <TraySlot $w={22}><Battery /></TraySlot>
          <Clock>13:24<br />07/09/2023</Clock>
          <NoticeCount>2</NoticeCount>
        </SystemTray>
      </Taskbar>
    </Screen>
  );
}
